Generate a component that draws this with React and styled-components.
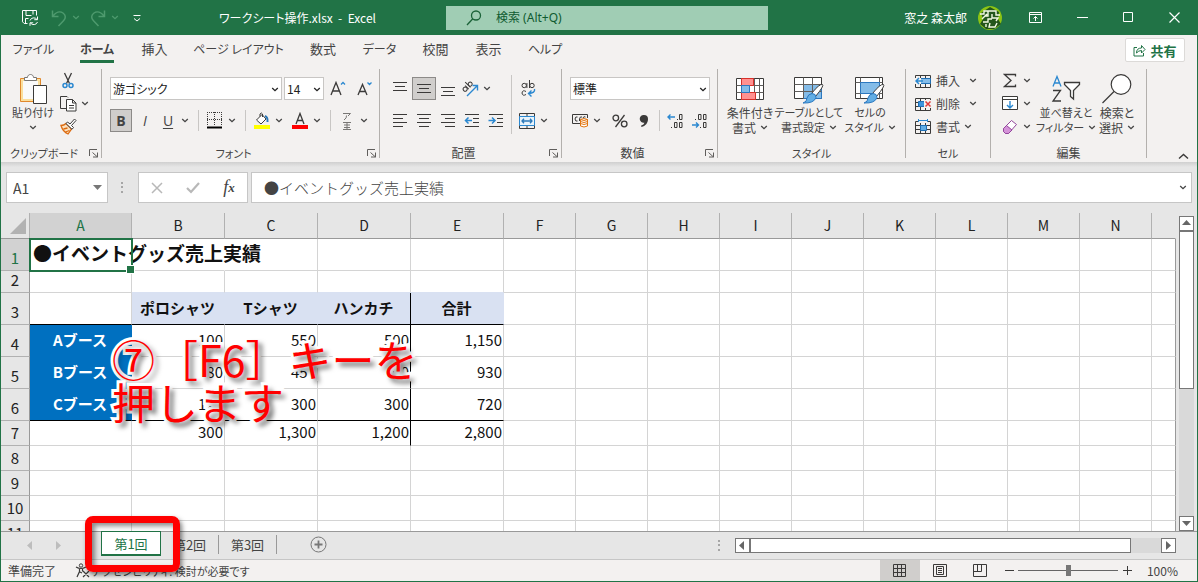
import React from "react";
import styled, { createGlobalStyle, css } from "styled-components";

const columns = "ABCDEFGHIJKLMN".split("");
const columnWidths = [102, 93, 93, 93, 93, 72, 72, 72, 72, 72, 72, 72, 72, 72];
const rowHeights = [32, 22, 32, 32, 32, 32, 25, 25, 25, 25, 25];

const cells = {
  B3: "ポロシャツ",
  C3: "Tシャツ",
  D3: "ハンカチ",
  E3: "合計",
  A4: "Aブース",
  B4: "100",
  C4: "550",
  D4: "500",
  E4: "1,150",
  A5: "Bブース",
  B5: "80",
  C5: "450",
  D5: "400",
  E5: "930",
  A6: "Cブース",
  B6: "120",
  C6: "300",
  D6: "300",
  E6: "720",
  B7: "300",
  C7: "1,300",
  D7: "1,200",
  E7: "2,800",
};

const tabs = [
  { label: "ファイル", width: 65, compact: true },
  { label: "ホーム", width: 62, compact: true, active: true },
  { label: "挿入", width: 53 },
  { label: "ページ レイアウト", width: 115, compact: true },
  { label: "数式", width: 54 },
  { label: "データ", width: 59, compact: true },
  { label: "校閲", width: 53 },
  { label: "表示", width: 53 },
  { label: "ヘルプ", width: 60, compact: true },
];

const Svg = ({ w, h, children, ...rest }) => (
  <svg
    width={w}
    height={h}
    viewBox={`0 0 ${w} ${h}`}
    fill="none"
    stroke="#3b3a39"
    aria-hidden="true"
    {...rest}
  >
    {children}
  </svg>
);

const Chevron = ({ color = "#444" }) => (
  <Svg w={8} h={5} stroke={color} strokeWidth="1.3">
    <path d="M1.2 1 4 3.7 6.8 1" />
  </Svg>
);

const SaveIcon = () => (
  <Svg w={18} h={18} stroke="#fff">
    <path d="M6.5 14.5H3.2L1.5 12.8V1.5h14v5M5 1.5v5h5.5M12 1.5v4M4.5 14.5V9.5h3" />
    <path d="M9 11.5a4 4 0 0 1 7-1M16.5 7.5v3.2h-3.2M16.5 13a4 4 0 0 1-7 1M9 16.8v-3h3.2" />
  </Svg>
);

const UndoIcon = ({ flip }) => (
  <Svg
    w={16}
    h={18}
    stroke="#4e9a6e"
    strokeWidth="1.5"
    transform={flip ? "scale(-1 1)" : undefined}
  >
    <path d="M1.5 1.5v6h6M2 7C5 3 9 2 12 4c3 2.2 3 5.2.5 7.8L7.5 17" />
  </Svg>
);

const SearchIcon = () => (
  <Svg w={16} h={16} stroke="#1b6238" strokeWidth="1.3">
    <circle cx="10" cy="5.5" r="4.5" />
    <path d="M6.8 8.7 1 15" />
  </Svg>
);

const Avatar = () => (
  <Svg w={24} h={24} stroke="none">
    <circle cx="12" cy="12" r="12" fill="#8cc414" />
    <path d="M3 7 12 1l9 5-1 7 3 5-7 5H8l-6-5 3-5z" fill="#24561c" />
    <path
      d="M2 8h4V5h12v4h4M9 8l-5 5M10 5v5H7M14 8v4h6l-2 3M5 16h5v-3h4M8 18v3M12 17l-1 4h6l2-4"
      stroke="#f4fae4"
      strokeWidth="1.4"
    />
  </Svg>
);

const PasteIcon = () => (
  <Svg w={28} h={32}>
    <path d="M1.5 5.5h20v23h-20z" fill="#fbdf9c" stroke="#e0882b" />
    <path d="M4 8h15v18H4z" fill="#fafafa" stroke="none" />
    <path d="M5.500 7.5v-3h3c0-4 6-4 6 0h3v3z" fill="#fff" stroke="#797775" />
    <path d="M14.5 12.5h13v18h-13z" fill="#fff" />
  </Svg>
);

const CutIcon = () => (
  <Svg w={12} h={17}>
    <path d="m2.5 1 5 10.5M9.5 1l-5 10.5" strokeWidth="1.3" />
    <circle cx="3" cy="13.5" r="2" stroke="#2b88d0" strokeWidth="1.5" />
    <circle cx="9" cy="13.5" r="2" stroke="#2b88d0" strokeWidth="1.5" />
  </Svg>
);

const CopyIcon = () => (
  <Svg w={17} h={17}>
    <path d="M6 13.5H.5V1.5h6.5l1 1" />
    <path d="M6.500 4.500h6l3.500 3.500v8H6.500zM12.500 4.500V8H16M9 10.500h5M9 13h5" fill="#fff" />
  </Svg>
);

const BrushIcon = () => (
  <Svg w={17} h={17}>
    <path d="M1 7.500q3 0 5-2l5.500 5.500-3.500 5q-5-2-7-8.500z" fill="#fbe0bd" stroke="#dd6b10" strokeWidth="1.3" />
    <path d="M3.500 11l4-1M5.500 14l4-1.500" stroke="#dd6b10" strokeWidth="1.3" />
    <path d="m6 5.500 1.500-1.500 2.500 2 4.500-5L16 2.500l-4.500 5 2 2-1.500 1.800z" fill="#fff" />
  </Svg>
);

const LaunchIcon = () => (
  <Svg w={10} h={10} stroke="#605e5c">
    <path d="M.5 8V1.5H8M3.5 4.5l5 4.5M8.500 4.500V9H4" />
  </Svg>
);

const GrowFont = ({ shrink }) => (
  <Svg w={17} h={16} strokeWidth="1.3">
    {shrink ? (
      <>
        <path d="M1 14 5.500 3.500 10 14M2.500 10.500h6" />
        <path d="m10.500 1.500 2 2 2-2" stroke="#2b88d0" />
      </>
    ) : (
      <>
        <path d="M1 14 6 1.500 11 14M2.800 10h6.500" />
        <path d="m11 3.500 2-2 2 2" stroke="#2b88d0" />
      </>
    )}
  </Svg>
);

const BordersIcon = () => (
  <Svg w={16} h={17}>
    <path d="M0 .5h15M0 7.500h15M.5 0v14M7.500 0v14M14.500 0v14" strokeDasharray="1 1" />
    <path d="M0 15.500h15" stroke="#000" strokeWidth="2" />
  </Svg>
);

const FillIcon = () => (
  <Svg w={16} h={18}>
    <path d="m2.500 8 5.500-5.500L12 7l-5 5zM6 4.500V2q1.500-2 2.500 0v3" fill="#fff" />
    <path d="M11 4q3 1 2.500 6" stroke="#2b78b8" strokeWidth="2" />
    <path d="M0 15h16" stroke="#ff0" strokeWidth="4" />
  </Svg>
);

const FontColorIcon = () => (
  <Svg w={16} h={18}>
    <path d="M4 12 8 1.500l4 10.500M5.500 8.500h5" strokeWidth="1.3" />
    <path d="M0 15h16" stroke="red" strokeWidth="4" />
  </Svg>
);

const PhoneticIcon = () => (
  <Svg w={10} h={18} stroke="#797775">
    <path d="M1 1.500h7.500L6 4M4.500 3.500Q5 6 2 8M1 10.500h8M2 13h6M2 15.500h6M1 17.500h8M5 10v7" />
  </Svg>
);

const lineSets = {
  top: ["M1 1.5h14", "M3 5.5h10", "M1 9.5h14"],
  middle: ["M1 3.5h14", "M3 7.5h10", "M1 11.5h14"],
  bottom: ["M1 6.5h14", "M3 10.5h10", "M1 14.5h14"],
  left: ["M1 1.5h14", "M1 5.5h10", "M1 9.5h14", "M1 13.5h10"],
  center: ["M1 1.5h14", "M3 5.5h10", "M1 9.5h14", "M3 13.5h10"],
  right: ["M1 1.5h14", "M5 5.5h10", "M1 9.5h14", "M5 13.5h10"],
};

const LinesIcon = ({ kind }) => (
  <Svg w={16} h={15}>
    <path d={lineSets[kind].join("")} />
  </Svg>
);

const IndentIcon = ({ out }) => (
  <Svg w={16} h={15}>
    <path d="M1 1.5h14M9 5.5h6M9 9.5h6M1 13.5h14" />
    <path d={out ? "M8 7.5H1.5m3-3-3 3 3 3" : "M.5 7.5H7m-3-3 3 3-3 3"} stroke="#2b88d0" strokeWidth="1.5" />
  </Svg>
);

const OrientationIcon = () => (
  <Svg w={17} h={17}>
    <g transform="rotate(-45 6 7)">
      <circle cx="2.5" cy="6.5" r="2" />
      <path d="M5 4v5M7.5 1.500V9" />
      <circle cx="9.6" cy="6.5" r="2" />
    </g>
    <path d="M5 16 15.5 5.5M10.5 5.5h5v5" stroke="#2b88d0" strokeWidth="1.4" />
  </Svg>
);

const WrapIcon = () => (
  <Svg w={15} h={18}>
    <circle cx="3.2" cy="5.5" r="2.2" />
    <path d="M5.9 3v5M8.5 0v8" />
    <circle cx="11" cy="5.5" r="2.2" />
    <path d="M5 11.500q-3.500-2-4 1.500.5 3.500 4 1.500" />
    <path d="M13.500 9q1 4-6 4.500m3-3-3 3 3 3" stroke="#2b88d0" strokeWidth="1.4" />
  </Svg>
);

const MergeIcon = () => (
  <Svg w={16} h={16}>
    <path d="M.5.5h15v15H.5zM.5 4.500h15M.5 11.500h15M8 .5v4M8 11.500v4" />
    <path d="M.5 3.500h15v9H.5z" fill="#e8f3fb" stroke="#2b88d0" />
    <path d="M3 8h10M5 5.800 3 8l2 2.200M11 5.800 13 8l-2 2.200" stroke="#2b78b8" strokeWidth="1.3" />
  </Svg>
);

const CurrencyIcon = () => (
  <Svg w={17} h={15}>
    <path d="M8 10.500H.5v-9h15V5" />
    <path d="M5.500 4q-2-1-2.500 2 .5 3 2.500 2M10 4q-2-1-2.500 2v2M13.500 4q-2-1-2.500 1" />
    <path d="M8.500 6.500q3.500-2 7 0v6.500q-3.500 2-7 0z" fill="#fff" stroke="#e3750f" />
    <path d="M8.500 6.500q3.500 2 7 0M8.500 8.500q3.500 2 7 0M8.500 10.500q3.500 2 7 0" stroke="#e3750f" />
  </Svg>
);

const PercentIcon = () => (
  <Svg w={16} h={14} strokeWidth="1.3">
    <circle cx="3.8" cy="4" r="2.8" />
    <circle cx="12.2" cy="10" r="2.8" />
    <path d="M12.500 1 3.500 13" />
  </Svg>
);

const CommaIcon = () => (
  <Svg w={10} h={14} stroke="none">
    <path
      d="M5 1a4 4 0 0 1 4 4c0 4-2.500 7-6.500 8L2 11.700c2-.8 3.200-1.800 3.400-3A3.900 3.900 0 1 1 5 1z"
      fill="#3b3a39"
    />
  </Svg>
);

const DecimalIcon = ({ less }) => (
  <Svg w={17} h={16}>
    {less ? (
      <>
        <path d="M4 6.500h1M7.500 1.500h2.500v5H7.500zM12.500 1.500H15v5h-2.500zM9 14.500h1M12.500 9.500H15v5h-2.500z" />
        <path d="M1 12h6.500m-2.500-2.500L7.500 12 5 14.500" stroke="#2b88d0" strokeWidth="1.4" />
      </>
    ) : (
      <>
        <path d="M10 6.500h1M12.500 1.500H15v5h-2.500zM4 14.500h1M7.500 9.500H10v5H7.500zM12.500 9.500H15v5h-2.500z" />
        <path d="M8 4H1m2.500-2.500L1 4l2.500 2.500" stroke="#2b88d0" strokeWidth="1.4" />
      </>
    )}
  </Svg>
);

const ConditionalIcon = () => (
  <Svg w={30} h={30}>
    <path d="M1.5 4.5h27v21h-27z" fill="#fff" />
    <path d="M1.5 11.5h27M1.5 18.5h27M6.5 4.5v21M19.5 4.5v21M24.5 4.5v21" stroke="#605e5c" />
    <path d="M6.5 4.5h12v7h-12zM6.5 18.5h14v7h-14z" fill="#ff9190" stroke="#d8302a" />
    <path d="M6.5 11.5h8v7h-8z" fill="#84bce8" stroke="#2b78c0" />
  </Svg>
);

const BrushOverlay = () => (
  <>
    <path d="M29.5 11.5q2 1-7 12l-4-3q8-10 11-9z" fill="#fff" />
    <path d="M19 20.500q4 0 4 4-2 6-13 5.500 4-1 4-5 1-4 5-4.500z" fill="#62aee5" stroke="#2b78c0" />
  </>
);

const TableStyleIcon = () => (
  <Svg w={32} h={32}>
    <path d="M1.5 4.5h27v21h-27z" fill="#fff" />
    <path d="M10.5 11.5h18v14h-18z" fill="#84bce8" stroke="#2b78c0" />
    <path d="M1.5 11.5h27M1.5 18.5h27M10.5 4.5v21M19.5 4.5v21" stroke="#605e5c" />
    <BrushOverlay />
  </Svg>
);

const CellStyleIcon = () => (
  <Svg w={32} h={32}>
    <path d="M1.5 4.5h27v21h-27z" fill="#fff" />
    <path d="M1.5 9.5h27M1.5 20.5h27M6.5 4.5v21M25.5 4.5v21" stroke="#605e5c" />
    <path d="M6.5 9.5h19v11h-19z" fill="#84bce8" stroke="#2b78c0" />
    <BrushOverlay />
  </Svg>
);

const CellIcon = ({ kind }) => (
  <Svg w={17} h={16}>
    <path d="M.5 2.500h15v12H.5zM.5 6.500h15M.5 10.500h15M5.500 2.500v12M10.500 2.500v12" />
    {kind === "insert" && (
      <>
        <path d="M5.500 5.500h10v5h-10z" fill="#84bce8" stroke="#1f6fb5" />
        <path d="M0 5h6v6H0z" fill="#f3f1f0" stroke="none" />
        <path d="M8 8H1m3-3L1 8l3 3" stroke="#2b88d0" strokeWidth="1.5" />
      </>
    )}
    {kind === "delete" && (
      <>
        <path d="M3.500 5.500h6v5h-6z" fill="#3d93dc" stroke="#1f6fb5" />
        <path d="M9 4h8v8H9z" fill="#f3f1f0" stroke="none" />
        <path d="m10.500 5.500 5 5m0-5-5 5" stroke="#e03a3a" strokeWidth="1.5" />
      </>
    )}
    {kind === "format" && (
      <>
        <path d="M3 0h10v4H3z" fill="#f3f1f0" stroke="none" />
        <path d="M3.500 0v3M12.500 0v3M3.500 1.500h9" stroke="#2b88d0" />
        <path d="M5.500 6.500h6v5h-6z" fill="#62aee5" stroke="#1f6fb5" />
      </>
    )}
  </Svg>
);

const SigmaIcon = () => (
  <Svg w={14} h={15} strokeWidth="1.3">
    <path d="M12.500 3.500V1.500H1.500L8 7.500l-6.500 6h11v-2" />
  </Svg>
);

const FillDownIcon = () => (
  <Svg w={16} h={15}>
    <path d="M.5.5h15v13H.5zM.5 3.500h15" fill="#fff" />
    <path d="M8 5v7M5 9l3 3 3-3" stroke="#2b88d0" strokeWidth="1.4" />
  </Svg>
);

const EraserIcon = () => (
  <Svg w={16} h={16} stroke="#92459b">
    <path d="m1.500 9.500 8-8 5 4-8 9h-3l-2-2z" fill="#fff" />
    <path d="m1.500 9.500 3-3 5.500 4.500-3.500 3.500h-3l-2-2z" fill="#d493d8" />
  </Svg>
);

const SortFilterIcon = () => (
  <Svg w={30} h={30} strokeWidth="1.3">
    <path d="M2 12.500 6 2.500l4 10M3.500 9h5" stroke="#2b88d0" />
    <path d="M2 16.500h7.500L2 27h8" />
    <path d="M13.500 8.500h15v2l-6 6V25l-3-2.500v-6l-6-6z" fill="#fff" />
  </Svg>
);

const FindIcon = () => (
  <Svg w={30} h={30} strokeWidth="1.2">
    <circle cx="19" cy="10.5" r="9.8" fill="#fff" />
    <path d="M12 17.500.5 29" />
  </Svg>
);

const AccessIcon = () => (
  <Svg w={15} h={15}>
    <circle cx="6" cy="2.5" r="1.7" />
    <path d="M1 4q5 3 10 0M4.500 5.500v3L2 14M7.500 5.500v3M5 9l2 1M8 8l6 6m0-6-6 6" strokeWidth="1.2" />
  </Svg>
);

const Triangle = ({ dir, color = "#666" }) => {
  const shapes = {
    up: "M0 6 4.500 1 9 6z",
    down: "M0 2h9L4.500 7z",
    left: "M6 0v9L1 4.500z",
    right: "M2 0v9l5-4.500z",
  };
  return (
    <Svg w={9} h={9} stroke="none">
      <path d={shapes[dir]} fill={color} />
    </Svg>
  );
};

const DotsIcon = () => (
  <Svg w={3} h={12} stroke="none">
    <path d="M0 0h2v2H0zM0 4h2v2H0zM0 9h2v2H0z" fill="#a6a6a6" />
  </Svg>
);

function Split({ label, children }) {
  return (
    <SplitWrap>
      <ToolButton $w={20} aria-label={label}>
        {children}
      </ToolButton>
      <ToolButton $w={14} aria-label={`${label} オプション`}>
        <Chevron />
      </ToolButton>
    </SplitWrap>
  );
}

function Combo({ label, value, width }) {
  return (
    <ComboWrap $w={width}>
      <select aria-label={label} defaultValue={value}>
        <option>{value}</option>
      </select>
      <Chevron color="#222" />
    </ComboWrap>
  );
}

function Group({ label, width, launcher, compact, children }) {
  return (
    <GroupWrap $w={width}>
      <GroupBody>{children}</GroupBody>
      <GroupFooter $compact={compact}>
        <span>{label}</span>
        {launcher && (
          <ToolButton $w={14} aria-label={`${label}の設定`}>
            <LaunchIcon />
          </ToolButton>
        )}
      </GroupFooter>
    </GroupWrap>
  );
}

function Big({ icon, lines, width, compact }) {
  return (
    <BigButton $w={width} $compact={compact}>
      {icon}
      <span>{lines[0]}</span>
      <span>
        {lines[1]}
        <Chevron />
      </span>
    </BigButton>
  );
}

function TitleBar() {
  return (
    <TitleWrap>
      <QuickAccess>
        <ToolButton $w={28} aria-label="保存">
          <SaveIcon />
        </ToolButton>
        <SplitWrap>
          <ToolButton $w={20} aria-label="元に戻す">
            <UndoIcon />
          </ToolButton>
          <ToolButton $w={14} aria-label="元に戻す履歴">
            <Chevron color="#4e9a6e" />
          </ToolButton>
        </SplitWrap>
        <SplitWrap>
          <ToolButton $w={20} aria-label="やり直し">
            <UndoIcon flip />
          </ToolButton>
          <ToolButton $w={14} aria-label="やり直し履歴">
            <Chevron color="#4e9a6e" />
          </ToolButton>
        </SplitWrap>
        <ToolButton $w={20} aria-label="カスタマイズ">
          <Svg w={8} h={8} stroke="#fff">
            <path d="M.5 1.500h7M1 4.500l3 2.500 3-2.500" />
          </Svg>
        </ToolButton>
        <DocTitle>ワークシート操作.xlsx&nbsp; -&nbsp; Excel</DocTitle>
      </QuickAccess>
      <SearchBox>
        <SearchIcon />
        <input type="search" aria-label="検索" placeholder="検索 (Alt+Q)" />
      </SearchBox>
      <Account>
        <span>窓之 森太郎</span>
        <Avatar />
        <WindowButtons>
          <button aria-label="リボンの表示オプション">
            <Svg w={14} h={12} stroke="#fff">
              <path d="M.5.5h12v10H.5zM.5 2.500h12M6.500 9V4.500M4.500 6.500l2-2 2 2" />
            </Svg>
          </button>
          <button aria-label="最小化">
            <Svg w={11} h={11} stroke="#fff">
              <path d="M0 5.500h11" />
            </Svg>
          </button>
          <button aria-label="最大化">
            <Svg w={11} h={11} stroke="#fff">
              <path d="M.5.5h9v9h-9z" />
            </Svg>
          </button>
          <button aria-label="閉じる">
            <Svg w={11} h={11} stroke="#fff" strokeWidth="1.2">
              <path d="m.5.5 10 10m0-10-10 10" />
            </Svg>
          </button>
        </WindowButtons>
      </Account>
    </TitleWrap>
  );
}

function Ribbon() {
  return (
    <RibbonWrap>
      <Group label="クリップボード" width={101} launcher compact>
        <BigButton $w={50} $compact>
          <PasteIcon />
          <span>貼り付け</span>
          <Chevron />
        </BigButton>
        <SmallStack>
          <ToolButton $w={20} aria-label="切り取り">
            <CutIcon />
          </ToolButton>
          <Split label="コピー">
            <CopyIcon />
          </Split>
          <ToolButton $w={20} aria-label="書式のコピー">
            <BrushIcon />
          </ToolButton>
        </SmallStack>
      </Group>

      <Group label="フォント" width={278} launcher compact>
        <Rows>
          <ToolRow>
            <Combo label="フォント名" value="游ゴシック" width={172} />
            <Combo label="フォント サイズ" value="14" width={40} />
            <ToolButton $w={25} aria-label="拡大">
              <GrowFont />
            </ToolButton>
            <ToolButton $w={25} aria-label="縮小">
              <GrowFont shrink />
            </ToolButton>
          </ToolRow>
          <ToolRow $tight>
            <ToolButton $w={22} $active $glyph="bold">
              B
            </ToolButton>
            <ToolButton $w={26} $glyph="italic">
              I
            </ToolButton>
            <Split label="下線">
              <u>U</u>
            </Split>
            <Divider />
            <Split label="罫線">
              <BordersIcon />
            </Split>
            <Divider />
            <Split label="塗りつぶしの色">
              <FillIcon />
            </Split>
            <Spacer />
            <Split label="フォントの色">
              <FontColorIcon />
            </Split>
            <Divider />
            <Split label="ふりがな">
              <PhoneticIcon />
            </Split>
          </ToolRow>
        </Rows>
      </Group>

      <Group label="配置" width={182} launcher>
        <Rows>
          <ToolRow $tight>
            <ToolButton $w={24} aria-label="上揃え">
              <LinesIcon kind="top" />
            </ToolButton>
            <ToolButton $w={24} $active aria-label="上下中央揃え">
              <LinesIcon kind="middle" />
            </ToolButton>
            <ToolButton $w={24} aria-label="下揃え">
              <LinesIcon kind="bottom" />
            </ToolButton>
            <Split label="方向">
              <OrientationIcon />
            </Split>
          </ToolRow>
          <ToolRow $tight>
            <ToolButton $w={24} aria-label="左揃え">
              <LinesIcon kind="left" />
            </ToolButton>
            <ToolButton $w={24} aria-label="中央揃え">
              <LinesIcon kind="center" />
            </ToolButton>
            <ToolButton $w={24} aria-label="右揃え">
              <LinesIcon kind="right" />
            </ToolButton>
            <ToolButton $w={24} aria-label="インデントを減らす">
              <IndentIcon out />
            </ToolButton>
            <ToolButton $w={24} aria-label="インデントを増やす">
              <IndentIcon />
            </ToolButton>
          </ToolRow>
        </Rows>
        <Divider $tall />
        <Rows $flush>
          <ToolRow>
            <ToolButton $w={22} aria-label="折り返して全体を表示する">
              <WrapIcon />
            </ToolButton>
          </ToolRow>
          <ToolRow>
            <Split label="セルを結合して中央揃え">
              <MergeIcon />
            </Split>
          </ToolRow>
        </Rows>
      </Group>

      <Group label="数値" width={156} launcher>
        <Rows>
          <ToolRow>
            <Combo label="表示形式" value="標準" width={140} />
          </ToolRow>
          <ToolRow $tight>
            <Split label="通貨">
              <CurrencyIcon />
            </Split>
            <Spacer />
            <ToolButton $w={24} aria-label="パーセント">
              <PercentIcon />
            </ToolButton>
            <ToolButton $w={24} aria-label="桁区切り">
              <CommaIcon />
            </ToolButton>
            <Divider $snug />
            <ToolButton $w={24} aria-label="小数点以下を増やす">
              <DecimalIcon />
            </ToolButton>
            <ToolButton $w={24} aria-label="小数点以下を減らす">
              <DecimalIcon less />
            </ToolButton>
          </ToolRow>
        </Rows>
      </Group>

      <Group label="スタイル" width={188} compact>
        <Big icon={<ConditionalIcon />} lines={["条件付き", "書式"]} width={50} />
        <Big
          icon={<TableStyleIcon />}
          lines={["テーブルとして", "書式設定"]}
          width={68}
          compact
        />
        <Big icon={<CellStyleIcon />} lines={["セルの", "スタイル"]} width={54} compact />
      </Group>

      <Group label="セル" width={85} compact>
        <SmallStack $indent>
          <CellButton $wide>
            <CellIcon kind="insert" />
            <span>挿入</span>
            <Chevron />
          </CellButton>
          <CellButton $wide>
            <CellIcon kind="delete" />
            <span>削除</span>
            <Chevron />
          </CellButton>
          <CellButton>
            <CellIcon kind="format" />
            <span>書式</span>
            <Chevron />
          </CellButton>
        </SmallStack>
      </Group>

      <Group label="編集" width={156}>
        <SmallStack $indent>
          <Split label="合計">
            <SigmaIcon />
          </Split>
          <Split label="フィル">
            <FillDownIcon />
          </Split>
          <Split label="クリア">
            <EraserIcon />
          </Split>
        </SmallStack>
        <Big icon={<SortFilterIcon />} lines={["並べ替えと", "フィルター"]} width={64} compact />
        <Big icon={<FindIcon />} lines={["検索と", "選択"]} width={38} />
      </Group>

      <CollapseButton aria-label="リボンを折りたたむ">
        <Svg w={11} h={7} strokeWidth="1.4">
          <path d="M1 5.500 5.500 1.500 10 5.500" />
        </Svg>
      </CollapseButton>
    </RibbonWrap>
  );
}

function FormulaBar() {
  return (
    <FormulaWrap>
      <NameBox>
        <input aria-label="名前ボックス" defaultValue="A1" />
        <Triangle dir="down" color="#777" />
      </NameBox>
      <DotsIcon />
      <FormulaButtons>
        <button aria-label="キャンセル">
          <Svg w={12} h={12} stroke="#b8b8b8" strokeWidth="1.5">
            <path d="m1 1 10 10m0-10L1 11" />
          </Svg>
        </button>
        <button aria-label="入力">
          <Svg w={14} h={12} stroke="#b8b8b8" strokeWidth="2.2">
            <path d="m1 6 4 4 8-9" />
          </Svg>
        </button>
        <button aria-label="関数の挿入">
          <em>f</em>
          <small>x</small>
        </button>
      </FormulaButtons>
      <FormulaInput>
        <input aria-label="数式バー" defaultValue="●イベントグッズ売上実績" />
        <Chevron />
      </FormulaInput>
    </FormulaWrap>
  );
}

function Sheet() {
  return (
    <SheetArea>
      <GridFrame>
        <Grid>
          <colgroup>
            <Col $w={29} />
            {columnWidths.map((w, i) => (
              <Col key={i} $w={w} />
            ))}
            <col />
          </colgroup>
          <thead>
            <tr>
              <Corner>
                <Svg w={18} h={18} stroke="none">
                  <path d="M17 1v16H1z" fill="#b2b2b2" />
                </Svg>
              </Corner>
              {columns.map((c) => (
                <ColHead key={c} scope="col" $active={c === "A"}>
                  {c}
                </ColHead>
              ))}
              <ColHead as="td" />
            </tr>
          </thead>
          <tbody>
            {rowHeights.map((h, i) => {
              const row = i + 1;
              return (
                <Row key={row} $h={h}>
                  <RowHead scope="row" $active={row === 1}>
                    {row}
                  </RowHead>
                  {columns.map((c) => (
                    <Cell key={c} $col={c} $row={row}>
                      {c === "A" && row === 1 ? (
                        <>
                          <SheetTitle>●イベントグッズ売上実績</SheetTitle>
                          <Selection />
                        </>
                      ) : (
                        cells[c + row]
                      )}
                    </Cell>
                  ))}
                  <Cell $col="O" $row={row} />
                </Row>
              );
            })}
          </tbody>
        </Grid>
        <Callout>
          ⑦［F6］キーを
          <br />
          押します
        </Callout>
      </GridFrame>
      <VScroll>
        <button aria-label="上へ">
          <Triangle dir="up" />
        </button>
        <VThumb />
        <button aria-label="下へ">
          <Triangle dir="down" />
        </button>
      </VScroll>
    </SheetArea>
  );
}

function SheetTabs() {
  return (
    <TabsBar>
      <SheetNav>
        <button aria-label="前のシート">
          <Triangle dir="left" color="#bdbdbd" />
        </button>
        <button aria-label="次のシート">
          <Triangle dir="right" color="#bdbdbd" />
        </button>
      </SheetNav>
      <ActiveSheet>
        <SheetTab $active>第1回</SheetTab>
        <RedFrame />
      </ActiveSheet>
      <SheetTab>第2回</SheetTab>
      <SheetTab>第3回</SheetTab>
      <AddSheet aria-label="新しいシート">
        <Svg w={17} h={17} stroke="#777">
          <circle cx="8.5" cy="8.5" r="7.5" />
          <path d="M8.500 4.500v8M4.500 8.500h8" strokeWidth="1.8" />
        </Svg>
      </AddSheet>
      <HScrollArea>
        <DotsIcon />
        <HScroll>
          <button aria-label="左へ">
            <Triangle dir="left" />
          </button>
          <HThumb />
          <button aria-label="右へ">
            <Triangle dir="right" />
          </button>
        </HScroll>
      </HScrollArea>
    </TabsBar>
  );
}

function StatusBar() {
  return (
    <StatusWrap>
      <span>準備完了</span>
      <AccessButton>
        <AccessIcon />
        アクセシビリティ: 検討が必要です
      </AccessButton>
      <StatusRight>
        <ViewButton $active aria-label="標準">
          <Svg w={14} h={14}>
            <path d="M.5.5h12v12H.5zM4.500.5v12M8.500.5v12M.5 4.500h12M.5 8.500h12" />
          </Svg>
        </ViewButton>
        <ViewButton aria-label="ページ レイアウト">
          <Svg w={14} h={14}>
            <path d="M.5.5h13v12H.5zM3.500 2.500h7v8h-7zM5 4.500h4M5 6.500h4M5 8.500h4" />
          </Svg>
        </ViewButton>
        <ViewButton aria-label="改ページ プレビュー">
          <Svg w={14} h={14}>
            <path d="M.5.5h13v12H.5zM4.500.5v7M8.500.5v7M.5 7.500h8" />
          </Svg>
        </ViewButton>
        <ZoomButton aria-label="縮小">
          <Svg w={9} h={9}>
            <path d="M0 4.500h9" />
          </Svg>
        </ZoomButton>
        <ZoomSlider type="range" min="10" max="190" defaultValue="100" aria-label="ズーム" />
        <ZoomButton aria-label="拡大">
          <Svg w={9} h={9}>
            <path d="M0 4.500h9M4.500 0v9" />
          </Svg>
        </ZoomButton>
        <ZoomValue>100%</ZoomValue>
      </StatusRight>
    </StatusWrap>
  );
}

function App() {
  return (
    <>
      <GlobalStyle />
      <Window>
        <TitleBar />
        <TabStrip>
          {tabs.map((t) => (
            <RibbonTab key={t.label} $w={t.width} $active={t.active} $compact={t.compact}>
              <span>{t.label}</span>
            </RibbonTab>
          ))}
          <ShareButton>
            <Svg w={13} h={13} stroke="#217346">
              <path d="M4 3.500H1v8.500h9.500V9M3.500 9q0-5 5-5V1.500l3.500 4-3.500 3.500V6.500q-3 0-5 2.500z" />
            </Svg>
            共有
          </ShareButton>
        </TabStrip>
        <Ribbon />
        <FormulaBar />
        <Sheet />
        <SheetTabs />
        <StatusBar />
      </Window>
    </>
  );
}

export default App;

const GlobalStyle = createGlobalStyle`
  * {
    box-sizing: border-box;
  }
  body {
    margin: 0;
    font-family: "Noto Sans CJK JP", sans-serif;
    font-size: 12px;
    color: #444;
  }
  button,
  input,
  select {
    margin: 0;
    padding: 0;
    border: 0;
    background: none;
    font: inherit;
    font-feature-settings: inherit;
    color: inherit;
    outline: none;
  }
  svg {
    display: block;
    flex-shrink: 0;
  }
`;

const center = css`
  display: flex;
  align-items: center;
  justify-content: center;
`;

const Window = styled.div`
  display: flex;
  flex-direction: column;
  height: 100vh;
  overflow: hidden;
  border: 1px solid #217346;
  border-top: 0;
  background: #e6e6e6;
  font-feature-settings: "palt";
`;

const TitleWrap = styled.header`
  display: grid;
  grid-template-columns: minmax(0, 1fr) 322px 429px;
  align-items: center;
  flex-shrink: 0;
  height: 35px;
  background: #217346;
  color: #fff;
`;

const QuickAccess = styled.div`
  display: flex;
  align-items: center;
  gap: 5px;
  padding-left: 15px;
`;

const DocTitle = styled.span`
  margin-left: 67px;
  white-space: nowrap;
`;

const SearchBox = styled.label`
  display: flex;
  align-items: center;
  gap: 14px;
  height: 24px;
  padding-left: 20px;
  background: #a0cdb4;
  color: #0f5b30;
  font-family: "Noto Sans", "Noto Sans CJK JP", sans-serif;
  input {
    flex: 1;
    min-width: 0;
  }
  input::placeholder {
    color: #0f5b30;
    opacity: 1;
  }
`;

const Account = styled.div`
  display: flex;
  align-items: center;
  justify-content: flex-end;
  gap: 11px;
`;

const WindowButtons = styled.div`
  display: flex;
  button {
    ${center}
    width: 46px;
    height: 35px;
  }
`;

const TabStrip = styled.nav`
  display: flex;
  flex-shrink: 0;
  height: 31px;
  padding-right: 12px;
  background: #f3f1f0;
`;

const RibbonTab = styled.button`
  ${center}
  align-items: flex-start;
  width: ${(p) => p.$w}px;
  padding-top: 3px;
  font-size: ${(p) => (p.$compact ? 12 : 13)}px;
  white-space: nowrap;
  span {
    line-height: 22px;
    border-bottom: 3px solid ${(p) => (p.$active ? "#217346" : "transparent")};
    font-weight: ${(p) => (p.$active ? 700 : 400)};
  }
`;

const ShareButton = styled.button`
  ${center}
  gap: 4px;
  width: 60px;
  height: 24px;
  margin: 3px 0 0 auto;
  border: 1px solid #dcdad8;
  border-radius: 2px;
  background: #fff;
  color: #217346;
  font-size: 13px;
  font-weight: 700;
`;

const RibbonWrap = styled.div`
  display: flex;
  flex-shrink: 0;
  height: 96px;
  background: #f3f1f0;
`;

const GroupWrap = styled.section`
  display: flex;
  flex-direction: column;
  flex-shrink: 0;
  width: ${(p) => p.$w}px;
  margin: 3px 0 4px;
  border-right: 1px solid #b3b0ad;
`;

const GroupBody = styled.div`
  display: flex;
  flex: 1;
  padding-left: 7px;
`;

const GroupFooter = styled.div`
  display: flex;
  align-items: center;
  height: 14px;
  line-height: 14px;
  margin-bottom: -2px;
  font-size: ${(p) => (p.$compact ? 11 : 12)}px;
  span {
    flex: 1;
    text-align: center;
    white-space: nowrap;
  }
`;

const ToolButton = styled.button`
  ${center}
  width: ${(p) => p.$w}px;
  height: 23px;
  ${(p) =>
    p.$active &&
    css`
      background: #d0cecc;
      border: 1px solid #8c8a88;
    `}
  ${(p) =>
    p.$glyph &&
    css`
      font-family: "Open Sans", sans-serif;
      font-size: 14px;
      font-weight: ${p.$glyph === "bold" ? 700 : 400};
      font-style: ${p.$glyph === "italic" ? "italic" : "normal"};
    `}
  u {
    font-family: "Open Sans", sans-serif;
    font-size: 14px;
    text-underline-offset: 2px;
  }
`;

const SplitWrap = styled.div`
  display: flex;
`;

const Spacer = styled.div`
  width: 4px;
`;

const Rows = styled.div`
  display: flex;
  flex-direction: column;
  gap: 9px;
  padding-top: 8px;
  padding-left: ${(p) => (p.$flush ? 0 : 1)}px;
`;

const ToolRow = styled.div`
  display: flex;
  align-items: center;
  gap: ${(p) => (p.$tight ? 0 : 2)}px;
  height: 23px;
`;

const Divider = styled.div`
  width: 1px;
  height: ${(p) => (p.$tall ? 59 : 21)}px;
  margin: ${(p) => (p.$tall ? "6px 5px 0 3px" : p.$snug ? "0 3px" : "0 6px")};
  background: #c8c6c4;
`;

const ComboWrap = styled.div`
  position: relative;
  width: ${(p) => p.$w}px;
  height: 23px;
  select {
    appearance: none;
    width: 100%;
    height: 100%;
    padding: 0 2px;
    border: 1px solid #c8c6c4;
    background: #fff;
    color: #222;
  }
  svg {
    position: absolute;
    right: 3px;
    top: 10px;
    pointer-events: none;
  }
`;

const BigButton = styled.button`
  display: flex;
  flex-direction: column;
  align-items: center;
  width: ${(p) => p.$w}px;
  padding-top: 4px;
  font-size: ${(p) => (p.$compact ? 11 : 12)}px;
  line-height: 15px;
  white-space: nowrap;
  > svg:first-child {
    height: 32px;
  }
  > svg:last-child {
    margin-top: 5px;
  }
  span {
    display: flex;
    align-items: center;
    gap: 4px;
  }
`;

const SmallStack = styled.div`
  display: flex;
  flex-direction: column;
  padding-left: ${(p) => (p.$indent ? 2 : 0)}px;
`;

const CellButton = styled.button`
  display: grid;
  grid-template-columns: 17px ${(p) => (p.$wide ? 29 : 24)}px 8px;
  gap: 4px;
  align-items: center;
  text-align: left;
  height: 23px;
`;

const CollapseButton = styled.button`
  margin: auto 8px 2px auto;
`;

const FormulaWrap = styled.div`
  display: flex;
  align-items: center;
  flex-shrink: 0;
  height: 51px;
  padding: 0 5px;
  background: linear-gradient(#cfcfcf, #e6e6e6 5px);
  font-size: 14px;
`;

const boxed = css`
  height: 31px;
  border: 1px solid #c6c6c6;
  background: #fff;
`;

const NameBox = styled.div`
  ${boxed}
  display: flex;
  align-items: center;
  width: 102px;
  margin-right: 13px;
  padding: 0 5px 0 6px;
  input {
    flex: 1;
    min-width: 0;
  }
`;

const FormulaButtons = styled.div`
  ${boxed}
  display: flex;
  width: 110px;
  margin: 0 3px 0 14px;
  button {
    ${center}
    flex: 1;
  }
  em,
  small {
    font-family: "Liberation Serif", serif;
    font-style: italic;
  }
  em {
    font-size: 18px;
  }
  small {
    font-size: 13px;
    font-weight: 700;
  }
`;

const FormulaInput = styled.div`
  ${boxed}
  display: flex;
  align-items: center;
  flex: 1;
  padding: 0 4px 0 12px;
  font-feature-settings: normal;
  input {
    flex: 1;
    min-width: 0;
    font-size: 15px;
    font-weight: 300;
  }
`;

const SheetArea = styled.div`
  display: flex;
  flex: 1;
  min-height: 0;
  padding-right: 3px;
  border-bottom: 1px solid #999;
`;

const GridFrame = styled.div`
  position: relative;
  flex: 1;
  min-width: 0;
  overflow: hidden;
`;

const Grid = styled.table`
  width: 100%;
  table-layout: fixed;
  border-spacing: 0;
  font-size: 15px;
  font-feature-settings: normal;
  th,
  td {
    padding: 0;
  }
`;

const Col = styled.col`
  width: ${(p) => p.$w}px;
`;

const Corner = styled.td`
  height: 26px;
  border-bottom: 1px solid #999;
  border-right: 1px solid #b1b1b1;
  svg {
    margin-left: 8px;
  }
`;

const ColHead = styled.th`
  height: 26px;
  line-height: 20px;
  border-bottom: 1px solid #999;
  border-right: 1px solid #b1b1b1;
  background: ${(p) => (p.$active ? "#d2d2d2" : "#e6e6e6")};
  color: ${(p) => (p.$active ? "#217346" : "#222")};
  font-size: 14px;
  font-weight: 400;
  && {
    padding-bottom: 2px;
  }
  &:last-child {
    border-right-color: #e6e6e6;
  }
`;

const Row = styled.tr`
  height: ${(p) => p.$h}px;
`;

const RowHead = styled.th`
  border-bottom: 1px solid #b1b1b1;
  border-right: 1px solid #999;
  background: ${(p) => (p.$active ? "#d2d2d2" : "#e6e6e6")};
  color: ${(p) => (p.$active ? "#217346" : "#222")};
  font-weight: 400;
  line-height: 18px;
  vertical-align: bottom;
  && {
    padding-bottom: 3px;
  }
`;

const blackBelow = (p) => "ABCDE".includes(p.$col) && (p.$row === 3 || p.$row === 6);

const Cell = styled.td`
  position: relative;
  border-right: 1px solid #d4d4d4;
  border-bottom: 1px solid #d4d4d4;
  background: #fff;
  color: #111;
  line-height: 18px;
  text-align: right;
  white-space: nowrap;
  && {
    padding: 0 1px 2px 0;
  }
  ${(p) =>
    p.$row === 2 &&
    "BCDE".includes(p.$col) &&
    css`
      border-bottom-color: #d9e1f2;
    `}
  ${(p) =>
    p.$row === 3 &&
    "BCDE".includes(p.$col) &&
    css`
      background: #d9e1f2;
      border-right-color: #d9e1f2;
      font-weight: 700;
      text-align: center;
    `}
  ${(p) =>
    p.$col === "A" &&
    p.$row > 3 &&
    p.$row < 7 &&
    css`
      background: #0070c0;
      border-color: #0070c0;
      color: #fff;
      font-weight: 700;
      text-align: center;
    `}
  ${(p) =>
    blackBelow(p) &&
    css`
      border-bottom-color: #000;
    `}
  ${(p) =>
    p.$col === "D" &&
    p.$row > 2 &&
    p.$row < 8 &&
    css`
      border-right-color: #000;
    `}
  ${(p) =>
    p.$row === 1 &&
    css`
      text-align: left;
      ${p.$col === "B" && "border-right-color: #fff;"}
      ${p.$col === "A" && "z-index: 1;"}
    `}
  &:last-child {
    border-right-color: #999;
  }
`;

const SheetTitle = styled.span`
  padding-left: 3px;
  font-size: 19px;
  font-weight: 700;
`;

const Selection = styled.div`
  position: absolute;
  inset: -1px -2px -2px -1px;
  border: 2px solid #217346;
  &::after {
    content: "";
    position: absolute;
    right: -4px;
    bottom: -4px;
    width: 7px;
    height: 7px;
    border: 1px solid #fff;
    background: #217346;
  }
`;

const Callout = styled.p`
  position: absolute;
  left: 111px;
  top: 124px;
  z-index: 2;
  margin: 0;
  color: red;
  font-size: 43px;
  font-weight: 400;
  line-height: 43px;
  white-space: nowrap;
  font-feature-settings: normal;
  -webkit-text-stroke: 6px #fff;
  paint-order: stroke fill;
  text-shadow: 4px 4px 5px rgba(0, 0, 0, 0.6);
`;

const scrollButton = css`
  button {
    ${center}
    flex-shrink: 0;
    width: 15px;
    height: 15px;
    border: 1px solid #777;
    background: #fff;
  }
`;

const VScroll = styled.div`
  display: flex;
  flex-direction: column;
  width: 15px;
  margin: 3px 0 0 3px;
  background: #d9d9d9;
  ${scrollButton}
  button:last-child {
    margin-top: auto;
  }
`;

const VThumb = styled.div`
  height: 50%;
  border: 1px solid #777;
  background: #fff;
`;

const TabsBar = styled.div`
  display: flex;
  align-items: flex-start;
  flex-shrink: 0;
  height: 28px;
  border-bottom: 1px solid #c6c6c6;
`;

const SheetNav = styled.div`
  display: flex;
  width: 100px;
  padding: 0 28px 0 15px;
  button {
    ${center}
    flex: 1;
    height: 26px;
  }
`;

const ActiveSheet = styled.div`
  position: relative;
  z-index: 3;
  margin-top: -1px;
`;

const SheetTab = styled.button`
  width: 58px;
  height: 19px;
  margin-top: 3px;
  border-right: 1px solid #999;
  line-height: 18px;
  font-size: 13px;
  font-feature-settings: normal;
  ${(p) =>
    p.$active &&
    css`
      display: block;
      width: 60px;
      height: 25px;
      margin-top: 0;
      padding-top: 2px;
      border: 1px solid #217346;
      border-bottom-width: 2px;
      background: #fff;
      color: #217346;
    `}
`;

const RedFrame = styled.div`
  position: absolute;
  inset: -15px -19px -16px -16px;
  border: 7px solid red;
  border-radius: 8px;
  box-shadow: 2px 3px 5px rgba(0, 0, 0, 0.5), inset 3px 3px 5px rgba(0, 0, 0, 0.45);
  pointer-events: none;
`;

const AddSheet = styled.button`
  margin: 4px 0 0 33px;
`;

const HScrollArea = styled.div`
  display: flex;
  align-items: center;
  gap: 14px;
  width: 458px;
  margin: 6px 21px 0 auto;
`;

const HScroll = styled.div`
  display: flex;
  flex: 1;
  background: #d9d9d9;
  ${scrollButton}
  button:last-child {
    margin-left: auto;
  }
`;

const HThumb = styled.div`
  flex: 0 1 381px;
  height: 15px;
  border: 1px solid #777;
  background: #fff;
`;

const StatusWrap = styled.footer`
  display: flex;
  align-items: center;
  flex-shrink: 0;
  height: 21px;
  padding-left: 7px;
  background: #f3f1f0;
  line-height: 18px;
`;

const AccessButton = styled.button`
  display: flex;
  align-items: center;
  gap: 2px;
  margin-left: 19px;
  font-size: 11px;
  white-space: nowrap;
`;

const StatusRight = styled.div`
  display: flex;
  align-items: center;
  height: 100%;
  margin-left: auto;
  padding-right: 19px;
`;

const ViewButton = styled.button`
  ${center}
  width: 40px;
  height: 100%;
  background: ${(p) => (p.$active ? "#d0cecc" : "none")};
`;

const ZoomButton = styled.button`
  ${center}
  width: 18px;
  height: 100%;
`;

const ZoomSlider = styled.input`
  appearance: none;
  width: 100px;
  height: 12px;
  background: linear-gradient(#666, #666) center / 100% 1px no-repeat;
  &::-webkit-slider-thumb {
    appearance: none;
    width: 5px;
    height: 11px;
    background: #777;
  }
`;

const ZoomValue = styled.span`
  width: 42px;
  text-align: right;
`;
